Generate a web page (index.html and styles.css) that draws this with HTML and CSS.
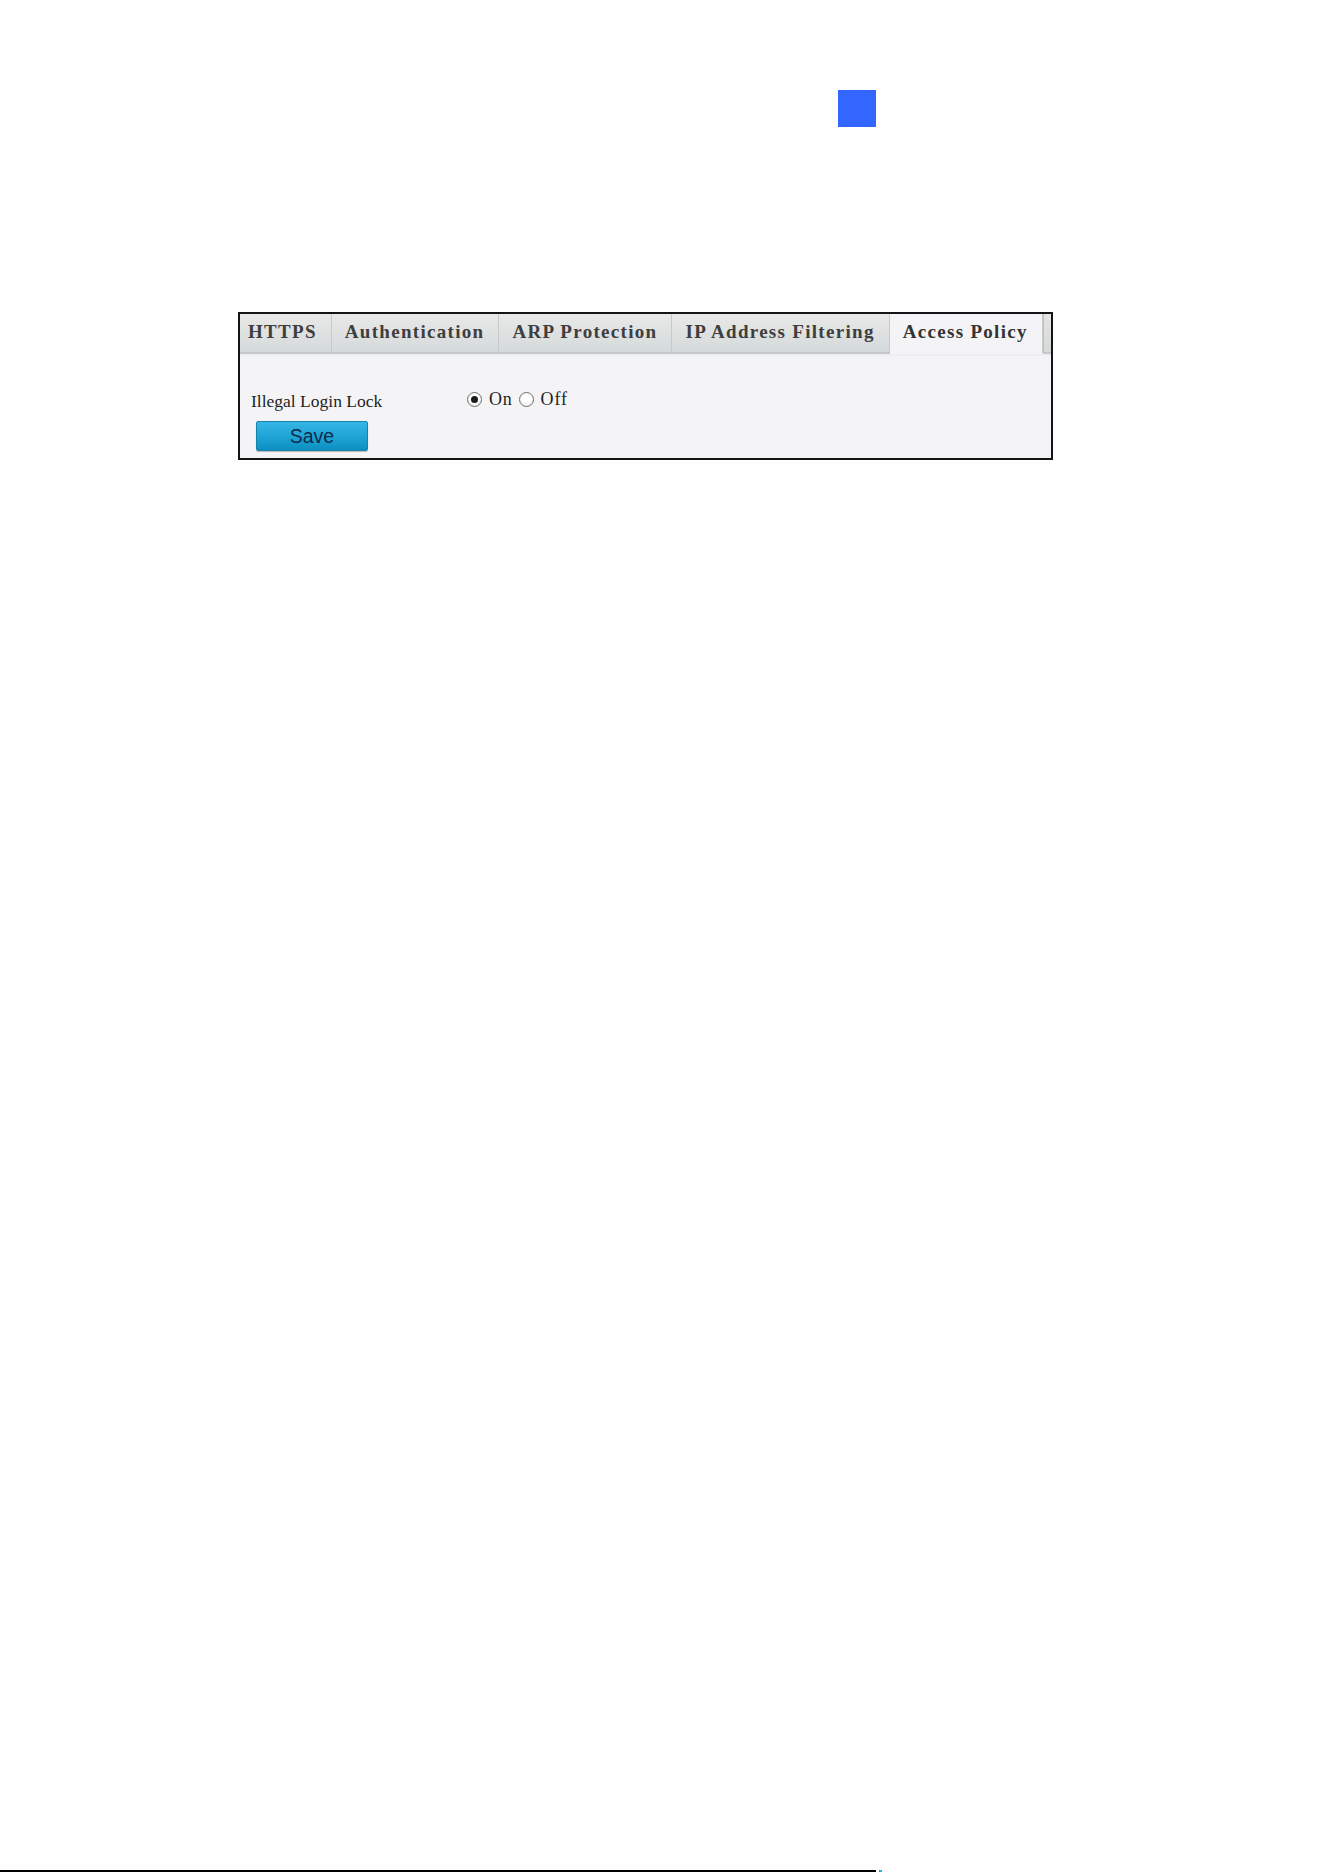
FILE: index.html
```html
<!DOCTYPE html>
<html lang="en">
<head>
<meta charset="utf-8">
<title>Access Policy</title>
<link rel="stylesheet" href="styles.css">
</head>
<body>
<div class="page">
  <div class="marker-row"><span class="marker"></span></div>

  <div class="panel">
    <div class="tabs">
      <div class="tab tab-first">HTTPS</div>
      <div class="tab">Authentication</div>
      <div class="tab">ARP Protection</div>
      <div class="tab">IP Address Filtering</div>
      <div class="tab tab-active">Access Policy</div>
      <div class="tab tab-rest"></div>
    </div>
    <div class="content">
      <div class="field-row">
        <div class="field-label">Illegal Login Lock</div>
        <div class="radio-group">
          <span class="radio radio-checked"></span><span class="radio-text">On</span>
          <span class="radio"></span><span class="radio-text">Off</span>
        </div>
      </div>
      <button class="save-btn" type="button">Save</button>
    </div>
  </div>

  <div class="footer-rule"><span class="footer-dot"></span></div>
</div>
</body>
</html>
```
FILE: styles.css
```css
html, body {
  margin: 0;
  padding: 0;
  background: #fefefe;
}

.page {
  height: 1872px;
  display: flex;
  flex-direction: column;
  overflow: hidden;
}

.marker-row {
  padding: 90px 0 0 838px;
  height: 37px;
}

.marker {
  display: block;
  width: 38px;
  height: 37px;
  background: #3366ff;
}

.panel {
  margin: 185px 0 0 238px;
  width: 815px;
  box-sizing: border-box;
  border: 2px solid #141414;
  background: #f4f4f6;
}

.tabs {
  display: flex;
  height: 40px;
  overflow: hidden;
  box-shadow: 0 2px 0 #eceef0;
}

.tab {
  flex: none;
  box-sizing: border-box;
  height: 40px;
  padding: 0 14px 0 13px;
  font-family: "Liberation Serif", "Times New Roman", serif;
  font-weight: bold;
  font-size: 19px;
  letter-spacing: 1.3px;
  line-height: 36px;
  color: #3e3e3e;
  background: linear-gradient(#e8e8e8 0%, #e0e2e2 45%, #d3dada 100%);
  border-right: 1px solid #c6cacb;
  border-bottom: 2px solid #c4c8c9;
  white-space: nowrap;
}

.tab-first {
  padding-left: 8px;
}

.tab-active {
  background: #f4f4f6;
  border-bottom-color: #f4f4f6;
  color: #333;
}

.tab-rest {
  width: 10px;
  padding: 0;
  border-left: 1px solid #bdbfc0;
  background: linear-gradient(#e4e4e4, #d6d8d8);
}

.content {
  padding: 35px 0 7px 11px;
}

.field-row {
  display: flex;
  align-items: flex-start;
  height: 22px;
}

.field-label {
  width: 216px;
  margin-top: 2px;
  font-family: "Liberation Serif", "Times New Roman", serif;
  font-size: 17.5px;
  line-height: 20px;
  color: #1e1e1e;
}

.radio-group {
  display: flex;
  align-items: center;
  height: 20px;
}

.radio {
  width: 15px;
  height: 15px;
  box-sizing: border-box;
  border: 1px solid #6f6f6f;
  border-radius: 50%;
  background: radial-gradient(circle at 50% 40%, #ffffff 40%, #e2e2e2 100%);
  display: flex;
  align-items: center;
  justify-content: center;
}

.radio-checked::after {
  content: "";
  width: 7px;
  height: 7px;
  border-radius: 50%;
  background: #1a1a1a;
}

.radio-text {
  margin: 0 6px 0 7px;
  font-family: "Liberation Serif", "Times New Roman", serif;
  font-size: 18px;
  letter-spacing: 0.8px;
  line-height: 20px;
  color: #1e1e1e;
}

.save-btn {
  display: block;
  margin: 10px 0 0 5px;
  width: 112px;
  height: 30px;
  padding: 0;
  border: 1px solid #1683ad;
  border-radius: 2px;
  background: linear-gradient(#35b6e4 0%, #1ea5d6 50%, #0c8fc0 100%);
  box-shadow: 0 1px 1px rgba(0, 0, 0, 0.25);
  font-family: "Liberation Sans", Arial, sans-serif;
  font-size: 19.5px;
  line-height: 28px;
  color: #0d2a4e;
  text-align: center;
}

.footer-rule {
  margin-top: auto;
  width: 876px;
  height: 2px;
  background: #000;
  position: relative;
}

.footer-dot {
  position: absolute;
  left: 879px;
  top: 0;
  width: 3px;
  height: 2px;
  background: linear-gradient(90deg, #e04060 50%, #30b0e0 50%);
}
```
